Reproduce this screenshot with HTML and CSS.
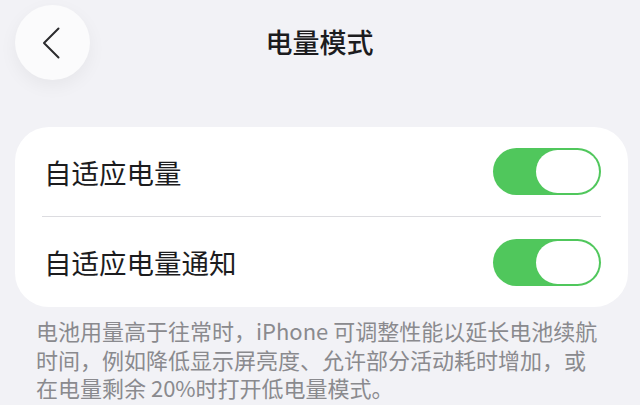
FILE: index.html
```html
<!DOCTYPE html>
<html lang="zh-CN">
<head>
    <meta charset="UTF-8">
    <meta name="viewport" content="width=device-width, initial-scale=1.0">
    <title>电量模式</title>
    <link rel="stylesheet" href="styles.css">
</head>
<body>
    <div class="page">
        <header class="nav">
            <button class="back" aria-label="返回">
                <svg viewBox="0 0 18 32" width="18" height="32">
                    <path d="M16.5 1.5 L2 16 L16.5 30.5" fill="none" stroke="#2b2b2e" stroke-width="2" stroke-linecap="round" stroke-linejoin="round"/>
                </svg>
            </button>
            <h1 class="title">电量模式</h1>
            <span></span>
        </header>

        <section class="card">
            <div class="row">
                <span class="label">自适应电量</span>
                <label class="toggle on"><span class="knob"></span></label>
            </div>
            <div class="row">
                <span class="label">自适应电量通知</span>
                <label class="toggle on"><span class="knob"></span></label>
            </div>
        </section>

        <p class="note">电池用量高于往常时，iPhone 可调整性能以延长电池续航时间，例如降低显示屏亮度、允许部分活动耗时增加，或在电量剩余 20%时打开低电量模式。</p>
    </div>
</body>
</html>
```

FILE: styles.css
```css
body {
    margin: 0;
    background: #f2f2f6;
    font-family: "Noto Sans CJK SC", "Noto Sans", sans-serif;
    color: #1c1c1e;
}

.page {
    width: 640px;
    height: 405px;
    overflow: hidden;
    padding: 5px 12px 0 15px;
    box-sizing: border-box;
}

.nav {
    display: grid;
    grid-template-columns: 1fr auto 1fr;
    align-items: center;
    height: 75px;
    margin-bottom: 47px;
}

.back {
    width: 75px;
    height: 75px;
    border-radius: 50%;
    border: none;
    background: #fbfbfc;
    box-shadow: 0 6px 18px rgba(0, 0, 0, 0.05);
    display: flex;
    justify-content: center;
    align-items: center;
    padding: 0 4px 0 0;
    cursor: pointer;
}

.title {
    margin: 0 0 2px 0;
    font-size: 27px;
    font-weight: 500;
    color: #1c1c1e;
    transform: translateX(-2px);
}

.card {
    background: #fff;
    border-radius: 34px;
    padding: 0 27px 0 27px;
}

.row {
    display: flex;
    align-items: center;
    justify-content: space-between;
    height: 89px;
}

.row + .row {
    border-top: 1px solid #dcdce0;
    height: 90px;
}

.label {
    font-size: 27.5px;
    font-weight: 400;
    padding-left: 2px;
}

.toggle {
    width: 108px;
    height: 47px;
    border-radius: 24px;
    background: #50c75c;
    display: flex;
    justify-content: flex-end;
    align-items: center;
    padding: 2px;
    box-sizing: border-box;
}

.knob {
    width: 63px;
    height: 43px;
    border-radius: 22px;
    background: #fff;
}

.note {
    margin: 9px 0 0 0;
    padding: 0 27px 0 21px;
    font-size: 22px;
    line-height: 28.5px;
    color: #8a8a8e;
}
```
